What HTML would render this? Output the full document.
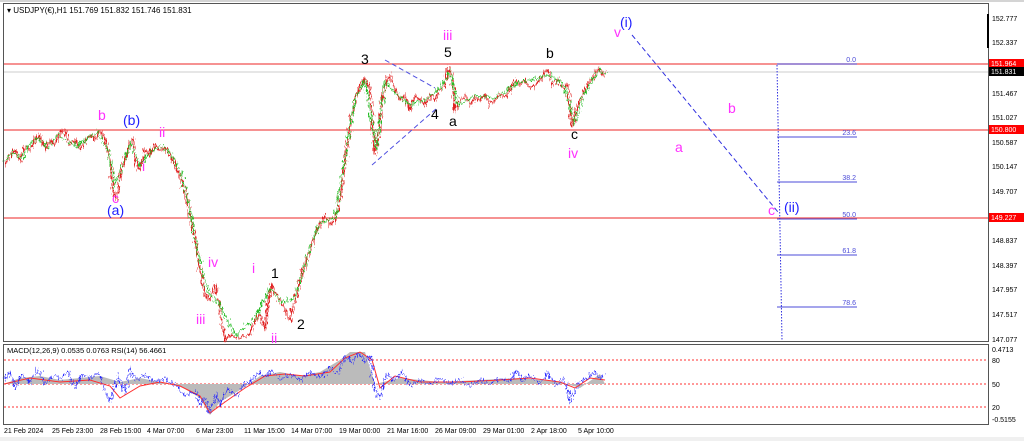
<!DOCTYPE html>
<html><head><meta charset="utf-8"><style>
body{margin:0;background:#fff;width:1024px;height:441px;overflow:hidden;font-family:"Liberation Sans",sans-serif}
svg text{font-family:"Liberation Sans",sans-serif}
</style></head><body>
<svg width="1024" height="441" viewBox="0 0 1024 441" xmlns="http://www.w3.org/2000/svg">
<defs>
<filter id="j" x="-5%" y="-20%" width="110%" height="140%">
<feTurbulence type="fractalNoise" baseFrequency="0.9 0.15" numOctaves="2" seed="3"/>
<feDisplacementMap in="SourceGraphic" scale="9" xChannelSelector="R" yChannelSelector="G"/>
</filter>
<filter id="j2" x="-5%" y="-20%" width="110%" height="140%">
<feTurbulence type="fractalNoise" baseFrequency="0.6 0.2" numOctaves="2" seed="7"/>
<feDisplacementMap in="SourceGraphic" scale="10" xChannelSelector="R" yChannelSelector="G"/>
</filter>
</defs>
<rect x="0" y="0" width="1024" height="441" fill="#fff"/>
<rect x="0" y="437" width="1024" height="4" fill="#f0f0f0"/>
<rect x="3.5" y="3.5" width="985" height="338" fill="none" stroke="#555" stroke-width="1"/>
<rect x="3.5" y="344.5" width="985" height="80" fill="none" stroke="#555" stroke-width="1"/>
<line x1="0" y1="1" x2="1024" y2="1" stroke="#aaa"/>
<text x="7" y="13" font-size="8" fill="#000">▾ USDJPY(€),H1  151.769 151.832 151.746 151.831</text>
<line x1="4" y1="72" x2="988" y2="72" stroke="#ccc"/>
<line x1="4" y1="64" x2="988" y2="64" stroke="#f05050" stroke-width="1.3"/>
<line x1="4" y1="130" x2="988" y2="130" stroke="#f05050" stroke-width="1.3"/>
<line x1="4" y1="218" x2="988" y2="218" stroke="#f05050" stroke-width="1.3"/>
<g stroke="#4b4bd8" stroke-width="1">
<line x1="777" y1="64" x2="857" y2="64"/><line x1="777" y1="137" x2="857" y2="137"/>
<line x1="777" y1="182" x2="857" y2="182"/><line x1="777" y1="219" x2="857" y2="219"/>
<line x1="777" y1="255" x2="857" y2="255"/><line x1="777" y1="307" x2="857" y2="307"/>
</g>
<g font-size="7" fill="#4b4bd8" text-anchor="end">
<text x="856" y="62">0.0</text><text x="856" y="135">23.6</text><text x="856" y="180">38.2</text>
<text x="856" y="217">50.0</text><text x="856" y="253">61.8</text><text x="856" y="305">78.6</text>
</g>
<line x1="777" y1="65" x2="782" y2="340" stroke="#3030e0" stroke-dasharray="1.5,1.5"/>
<line x1="632" y1="35" x2="778" y2="212" stroke="#3030e0" stroke-dasharray="5,3"/>
<line x1="385" y1="60" x2="435" y2="88" stroke="#5050e0" stroke-dasharray="5,3"/>
<line x1="372" y1="165" x2="437" y2="108" stroke="#5050e0" stroke-dasharray="5,3"/>
<g filter="url(#j)">
<polyline fill="none" stroke="#e02020" stroke-width="1.6" points="5,165 10,155 15,150 20,160 25,145 30,150 35,140 40,135 45,150 50,140 55,145 60,132 65,130 70,145 75,140 80,150 85,140 90,135 95,140 100,130 105,140 110,160 113,190 117,200 120,175 125,160 130,145 133,138 136,165 140,170 145,150 150,155 155,145 160,150 165,148 170,155 175,165 180,175 185,190 190,215 195,240 200,270 205,295 210,300 215,285 220,310 225,340 230,335 240,338 250,335 255,320 260,315 265,330 268,300 272,285 276,295 280,300 285,310 290,320 295,300 300,280 305,265 310,250 315,235 320,225 325,215 330,225 335,220 340,200 345,160 350,125 355,100 360,85 365,78 370,90 375,155 378,140 382,100 386,80 390,75 395,90 400,100 405,95 410,110 415,95 420,100 425,105 430,95 435,100 440,90 445,85 448,68 452,75 455,110 460,100 465,95 470,105 475,98 480,100 485,95 490,105 495,100 500,95 505,98 510,90 515,80 520,85 525,80 530,88 535,85 540,80 545,72 548,70 552,85 558,80 562,88 568,85 572,128 576,110 580,100 585,90 590,82 595,75 598,68 602,75 605,72"/>
</g>
<g filter="url(#j2)">
<polyline fill="none" stroke="#22bb22" stroke-width="1.2" points="5,162 12,152 22,158 28,146 38,138 48,148 58,134 68,142 78,146 88,138 98,132 108,150 115,185 122,168 131,142 140,166 150,152 160,146 170,152 180,172 190,210 200,265 210,296 220,305 235,336 255,318 270,288 282,302 295,298 310,248 320,222 335,218 345,158 355,98 365,80 376,150 385,82 398,95 410,105 425,100 440,88 450,72 458,105 475,96 495,98 510,88 520,82 540,78 550,75 565,86 574,125 582,98 592,80 600,70 605,74"/>
</g>
<g font-size="14">
<text x="98" y="120" fill="#ff30ff">b</text><text x="123" y="125" fill="#2020ff">(b)</text>
<text x="159" y="137" fill="#ff30ff">ii</text><text x="142" y="171" fill="#ff30ff">i</text>
<text x="112" y="203" fill="#ff30ff">c</text><text x="107" y="215" fill="#2020ff">(a)</text>
<text x="208" y="267" fill="#ff30ff">iv</text><text x="196" y="324" fill="#ff30ff">iii</text>
<text x="252" y="273" fill="#ff30ff">i</text><text x="271" y="278" fill="#000">1</text>
<text x="297" y="329" fill="#000">2</text><text x="271" y="343" fill="#ff30ff">ii</text>
<text x="361" y="64" fill="#000">3</text><text x="431" y="119" fill="#000">4</text>
<text x="443" y="40" fill="#ff30ff">iii</text><text x="444" y="57" fill="#000">5</text>
<text x="449" y="126" fill="#000">a</text><text x="546" y="58" fill="#000">b</text>
<text x="571" y="139" fill="#000">c</text><text x="568" y="158" fill="#ff30ff">iv</text>
<text x="675" y="152" fill="#ff30ff">a</text><text x="728" y="113" fill="#ff30ff">b</text>
<text x="614" y="37" fill="#ff30ff">v</text><text x="620" y="27" fill="#2020ff">(i)</text>
<text x="768" y="215" fill="#ff30ff">c</text><text x="784" y="212" fill="#2020ff">(ii)</text>
</g>
<line x1="988" y1="14" x2="988" y2="48" stroke="#000" stroke-width="2"/>
<g font-size="7" fill="#000">
<text x="992" y="21">152.777</text><text x="992" y="45">152.337</text>
<text x="992" y="96">151.467</text><text x="992" y="120">151.027</text>
<text x="992" y="145">150.587</text><text x="992" y="169">150.147</text>
<text x="992" y="194">149.707</text><text x="992" y="243">148.837</text>
<text x="992" y="268">148.397</text><text x="992" y="292">147.957</text>
<text x="992" y="317">147.517</text><text x="992" y="342">147.077</text>
<text x="992" y="352">0.4713</text><text x="992" y="363">80</text>
<text x="992" y="387">50</text><text x="992" y="410">20</text><text x="992" y="422">-0.5155</text>
</g>
<rect x="989" y="59" width="35" height="9" fill="#ff0000"/><text x="991" y="66" font-size="7" fill="#fff">151.964</text>
<rect x="989" y="67" width="35" height="9" fill="#000"/><text x="991" y="74" font-size="7" fill="#fff">151.831</text>
<rect x="989" y="125" width="35" height="9" fill="#ff0000"/><text x="991" y="132" font-size="7" fill="#fff">150.800</text>
<rect x="989" y="213" width="35" height="9" fill="#ff0000"/><text x="991" y="220" font-size="7" fill="#fff">149.227</text>
<text x="7" y="353" font-size="7.5" fill="#000">MACD(12,26,9) 0.0535 0.0763  RSI(14) 56.4661</text>
<g stroke="#ff3030" stroke-dasharray="2,2"><line x1="4" y1="360" x2="988" y2="360"/><line x1="4" y1="384" x2="988" y2="384"/><line x1="4" y1="407" x2="988" y2="407"/></g>
<path d="M4,384 L20,378 40,376 60,380 80,378 100,376 120,382 140,378 160,382 180,386 200,398 210,415 220,402 240,390 260,376 280,372 300,376 320,372 340,360 350,352 365,352 375,384 400,378 440,382 480,380 520,378 560,382 580,388 600,374 605,384 L605,384 4,384Z" fill="#bbb"/>
<polyline fill="none" stroke="#ff3030" points="4,384 30,378 60,382 90,380 110,386 120,398 140,386 160,382 180,386 200,396 210,413 225,402 245,388 265,376 285,374 305,376 330,372 345,358 360,352 372,360 380,388 395,376 420,382 460,382 500,380 530,378 560,382 575,388 590,378 605,380"/>
<g filter="url(#j2)">
<polyline fill="none" stroke="#2020ff" points="4,380 10,372 15,388 22,374 30,382 38,370 45,384 52,376 60,378 68,372 75,388 82,374 90,380 98,372 105,390 110,402 118,376 125,392 130,370 136,380 145,375 155,382 165,378 175,385 185,395 195,392 200,405 205,398 210,412 215,395 220,405 228,388 236,396 244,385 252,380 258,372 264,378 272,370 280,380 290,374 300,380 310,372 320,378 330,368 338,374 345,356 352,362 358,352 365,362 370,356 375,392 380,398 386,374 394,380 402,372 410,386 420,380 430,384 440,378 450,384 460,380 470,386 480,380 490,384 500,378 510,382 516,370 522,380 530,376 540,384 548,372 556,386 564,378 570,402 575,390 580,382 588,378 594,372 600,378 605,376"/>
</g>
<g font-size="7" fill="#000">
<text x="4" y="433">21 Feb 2024</text><text x="52" y="433">25 Feb 23:00</text><text x="100" y="433">28 Feb 15:00</text>
<text x="147" y="433">4 Mar 07:00</text><text x="196" y="433">6 Mar 23:00</text><text x="244" y="433">11 Mar 15:00</text>
<text x="291" y="433">14 Mar 07:00</text><text x="339" y="433">19 Mar 00:00</text><text x="387" y="433">21 Mar 16:00</text>
<text x="435" y="433">26 Mar 09:00</text><text x="483" y="433">29 Mar 01:00</text><text x="531" y="433">2 Apr 18:00</text>
<text x="578" y="433">5 Apr 10:00</text>
</g>
</svg>
</body></html>
